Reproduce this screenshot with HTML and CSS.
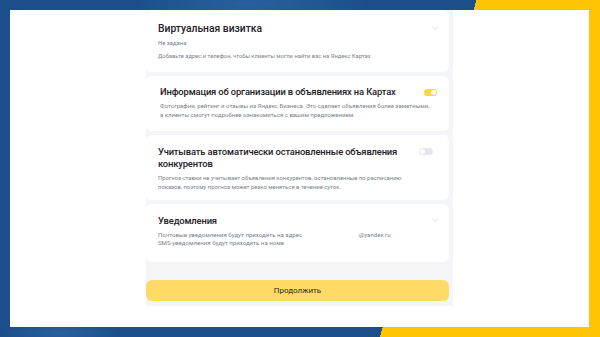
FILE: index.html
```html
<!DOCTYPE html>
<html lang="ru">
<head>
<meta charset="utf-8">
<link rel="stylesheet" href="styles.css">
</head>
<body>
<div class="frame">
  <div class="spacer"></div>
  <div class="panel">
    <section class="card card-1">
      <div class="head">
        <h2 class="title">Виртуальная визитка</h2>
        <svg class="chevron" width="6" height="4" viewBox="0 0 6 4"><path d="M0.5 0.7 L3 3.2 L5.5 0.7" fill="none" stroke="#c9ccd4" stroke-width="0.7"/></svg>
      </div>
      <p class="note">Не задана</p>
      <p class="desc desc-1">Добавьте адрес и телефон, чтобы клиенты могли найти вас на Яндекс Картах</p>
    </section>
    <section class="card card-2">
      <div class="head">
        <h2 class="title">Информация об организации в объявлениях на Картах</h2>
        <span class="toggle on"></span>
      </div>
      <p class="desc">Фотографии, рейтинг и отзывы из Яндекс Бизнеса. Это сделает объявления более заметными,<br>а клиенты смогут подробнее ознакомиться с вашим предложением.</p>
    </section>
    <section class="card card-3">
      <div class="head">
        <h2 class="title">Учитывать автоматически остановленные объявления<br>конкурентов</h2>
        <span class="toggle off"></span>
      </div>
      <p class="desc">Прогноз ставки не учитывает объявления конкурентов, остановленные по расписанию<br>показов, поэтому прогноз может резко меняться в течение суток.</p>
    </section>
    <section class="card card-4">
      <div class="head">
        <h2 class="title">Уведомления</h2>
        <svg class="chevron" width="6" height="4" viewBox="0 0 6 4"><path d="M0.5 0.7 L3 3.2 L5.5 0.7" fill="none" stroke="#c9ccd4" stroke-width="0.7"/></svg>
      </div>
      <p class="desc">Почтовые уведомления будут приходить на адрес<span class="mail">.@yandex.ru</span><br>SMS-уведомления будут приходить на номе</p>
    </section>
    <button class="continue">Продолжить</button>
  </div>
</div>
</body>
</html>
```
FILE: styles.css
```css
html, body {
  margin: 0;
  padding: 0;
}
body {
  width: 600px;
  height: 337px;
  overflow: hidden;
  font-family: Roboto, "Noto Sans", sans-serif;
  background:
    radial-gradient(ellipse 120px 20px at 250px 4px, rgba(70,130,200,0.35), rgba(70,130,200,0) 100%),
    radial-gradient(ellipse 60px 10px at 60px 333px, rgba(70,130,200,0.35), rgba(70,130,200,0) 100%),
    linear-gradient(106deg, #1c4e8b 68.4%, #ffc404 68.4%);
  padding: 10px 11px 10px 10px;
  box-sizing: border-box;
}
.frame {
  height: 317px;
  background: #ffffff;
  display: flex;
  overflow: hidden;
}
.spacer {
  width: 136px;
  flex: none;
}
.panel {
  width: 303px;
  flex: none;
  background: #f4f5f9;
  padding: 0 4px 5px 0;
  display: flex;
  flex-direction: column;
  gap: 4px;
  align-self: flex-start;
}
.card {
  background: #ffffff;
  border-radius: 6px;
  padding: 0 12px;
  box-sizing: border-box;
}
.head {
  display: flex;
  justify-content: space-between;
  align-items: flex-start;
}
.title {
  margin: 0;
  font-size: 9.4px;
  line-height: 12px;
  font-weight: 500;
  letter-spacing: -0.15px;
  color: #21201f;
  white-space: nowrap;
}
.note, .desc {
  margin: 0;
  font-size: 5.9px;
  color: #7b7f89;
  white-space: nowrap;
}
.note {
  line-height: 8px;
  margin-top: 4px;
}
.chevron {
  margin-top: 3px;
  margin-right: -1px;
}
.card-1 {
  height: 62px;
  padding-top: 13px;
}
.card-1 .title {
  font-size: 10.3px;
  letter-spacing: 0;
}
.desc-1 {
  line-height: 8px;
  margin-top: 5px;
  font-size: 5.8px;
}
.card-2 {
  height: 55px;
  padding-top: 10px;
  padding-left: 14px;
}
.card-2 .desc {
  line-height: 9px;
  margin-top: 2.5px;
  font-size: 6px;
}
.card-3 {
  height: 65px;
  padding-top: 11px;
  padding-right: 16px;
}
.card-3 .desc {
  line-height: 9px;
  margin-top: 3.5px;
  font-size: 5.88px;
}
.card-4 {
  height: 58px;
  padding-top: 11px;
}
.card-4 .desc {
  line-height: 8px;
  margin-top: 4px;
  font-size: 6.1px;
}
.mail {
  margin-left: 55px;
}
.toggle {
  width: 13px;
  height: 7px;
  border-radius: 4px;
  position: relative;
  flex: none;
  margin-top: 2.5px;
}
.toggle::after {
  content: "";
  position: absolute;
  top: 1px;
  width: 5px;
  height: 5px;
  border-radius: 50%;
  background: #ffffff;
}
.toggle.on {
  background: #fdd54a;
}
.toggle.on::after {
  right: 1px;
}
.toggle.off {
  width: 14px;
  background: #e4e6ec;
  margin-top: 2px;
}
.toggle.off::after {
  left: 1px;
}
.continue {
  margin-top: 14px;
  height: 21px;
  border: none;
  border-radius: 6px;
  background: #fedb66;
  font-family: Roboto, "Noto Sans", sans-serif;
  font-size: 8px;
  font-weight: 400;
  color: #2b2a28;
  padding: 0;
}
```
